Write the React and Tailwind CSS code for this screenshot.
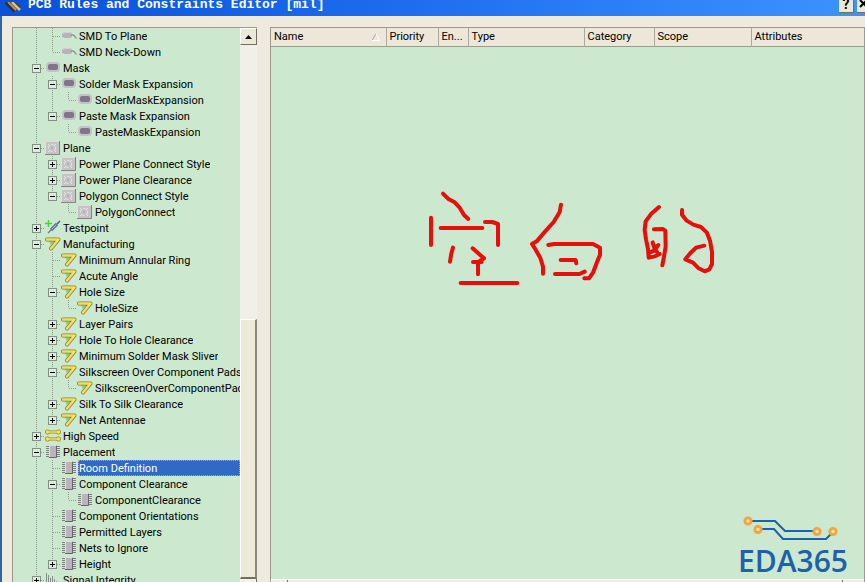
import { useState } from 'react';

const TREE = [
  {
    label: 'SMT',
    icon: 'smd',
    headless: true,
    children: [
      { label: 'SMD To Plane', icon: 'smd' },
      { label: 'SMD Neck-Down', icon: 'smd' },
    ],
  },
  {
    label: 'Mask',
    icon: 'mask',
    children: [
      { label: 'Solder Mask Expansion', icon: 'mask', children: [{ label: 'SolderMaskExpansion', icon: 'mask' }] },
      { label: 'Paste Mask Expansion', icon: 'mask', children: [{ label: 'PasteMaskExpansion', icon: 'mask' }] },
    ],
  },
  {
    label: 'Plane',
    icon: 'plane',
    children: [
      { label: 'Power Plane Connect Style', icon: 'plane', collapsed: true },
      { label: 'Power Plane Clearance', icon: 'plane', collapsed: true },
      { label: 'Polygon Connect Style', icon: 'plane', children: [{ label: 'PolygonConnect', icon: 'plane' }] },
    ],
  },
  { label: 'Testpoint', icon: 'probe', collapsed: true },
  {
    label: 'Manufacturing',
    icon: 'mfg',
    children: [
      { label: 'Minimum Annular Ring', icon: 'mfg' },
      { label: 'Acute Angle', icon: 'mfg' },
      { label: 'Hole Size', icon: 'mfg', children: [{ label: 'HoleSize', icon: 'mfg' }] },
      { label: 'Layer Pairs', icon: 'mfg', collapsed: true },
      { label: 'Hole To Hole Clearance', icon: 'mfg', collapsed: true },
      { label: 'Minimum Solder Mask Sliver', icon: 'mfg', collapsed: true },
      {
        label: 'Silkscreen Over Component Pads',
        icon: 'mfg',
        children: [{ label: 'SilkscreenOverComponentPads', icon: 'mfg' }],
      },
      { label: 'Silk To Silk Clearance', icon: 'mfg', collapsed: true },
      { label: 'Net Antennae', icon: 'mfg', collapsed: true },
    ],
  },
  { label: 'High Speed', icon: 'speed', collapsed: true },
  {
    label: 'Placement',
    icon: 'chip',
    children: [
      { label: 'Room Definition', icon: 'chip' },
      { label: 'Component Clearance', icon: 'chip', children: [{ label: 'ComponentClearance', icon: 'chip' }] },
      { label: 'Component Orientations', icon: 'chip' },
      { label: 'Permitted Layers', icon: 'chip' },
      { label: 'Nets to Ignore', icon: 'chip' },
      { label: 'Height', icon: 'chip', collapsed: true },
    ],
  },
  { label: 'Signal Integrity', icon: 'signal', collapsed: true, more: true },
];

const COLUMNS = [
  { label: 'Name', width: 'w-[115px]', sorted: true },
  { label: 'Priority', width: 'w-[52px]' },
  { label: 'En...', width: 'w-[30px]' },
  { label: 'Type', width: 'w-[116px]' },
  { label: 'Category', width: 'w-[70px]' },
  { label: 'Scope', width: 'w-[97px]' },
  { label: 'Attributes', width: '' },
];

const ICONS = {
  smd: (
    <>
      <path d="M3 4h6l2 2v3l-2 1H4L1 9V6z" fill="#b9b3b9" />
      <path d="M2 6l2-1.500h5" stroke="#d6d0d6" fill="none" />
      <path d="M10 7h2.500l3 3.500" stroke="#8f9a90" strokeWidth="1.4" fill="none" />
    </>
  ),
  mask: (
    <>
      <rect x="1" y="2" width="14" height="10" rx="4" fill="#c6c0c9" />
      <rect x="3" y="4" width="10" height="6" rx="2" fill="#7f7789" />
    </>
  ),
  plane: (
    <>
      <path d="M0 1h15v14H0z" fill="#c6c3c7" />
      <path d="M.5 14V1.500H14" stroke="#e0dee1" fill="none" />
      <path d="M0 14.500h14.500V1" stroke="#85808a" fill="none" />
      <circle cx="7" cy="8" r="3.500" stroke="#e8e6e9" fill="none" strokeDasharray="3 2" />
      <path d="M3 4l2 2M11 4L9 6M3 12l2-2M11 12l-2-2" stroke="#e8e6e9" />
      <circle cx="7" cy="8" r="1" fill="#aaa6ad" />
    </>
  ),
  probe: (
    <>
      <path d="M3.500 0v7M0 3.500h7" stroke="#4fd02c" strokeWidth="1.4" />
      <path d="M3 13l3-3" stroke="#6c7a86" strokeWidth="1.2" />
      <path d="M6 10l6-6" stroke="#5e7c9c" strokeWidth="3.4" />
      <path d="M7 9l4-4" stroke="#9fc0dc" />
      <path d="M12 4l3-3" stroke="#4c5a66" strokeWidth="1.4" />
    </>
  ),
  mfg: (
    <>
      <path d="M4 5h6l-4 4z" fill="#7fd68a" />
      <path
        d="M2 3.500h11.500L6 12.500"
        stroke="#8b7a34"
        strokeWidth="4"
        strokeLinejoin="round"
        strokeLinecap="round"
        fill="none"
      />
      <path
        d="M2 3.500h11.500L6 12.500"
        stroke="#efe268"
        strokeWidth="2.4"
        strokeLinejoin="round"
        strokeLinecap="round"
        fill="none"
      />
      <path d="M2 3.500h10" stroke="#f0cf9c" />
    </>
  ),
  speed: (
    <>
      <path d="M2 4h12M2 11h12" stroke="#98862b" strokeWidth="3.2" />
      <g fill="#f0e552" stroke="#98862b" strokeWidth=".8">
        <circle cx="2.500" cy="4" r="2.2" />
        <circle cx="13.500" cy="4" r="2.2" />
        <circle cx="2.500" cy="11" r="2.2" />
        <circle cx="13.500" cy="11" r="2.2" />
      </g>
      <path d="M2 4h12M2 11h12" stroke="#f0e552" strokeWidth="1.6" />
    </>
  ),
  chip: (
    <>
      <path d="M1 2.500h14M1 4.500h14M1 6.500h14M1 8.500h14M1 10.500h14M1 12.500h14" stroke="#7f7d83" />
      <rect x="4" y="1" width="8" height="13" fill="#b8b5bb" />
      <path d="M4.500 13V1.500H11" stroke="#e0dee2" fill="none" />
      <path d="M4 13.500h7.500V2" stroke="#67646b" fill="none" />
    </>
  ),
  signal: (
    <path
      d="M1.500 15V1M3.500 15V3M5.500 15V6M7.500 15V4M9.500 15V7M11.500 15V9M13.500 15v-5"
      stroke="#84908a"
    />
  ),
};

function Glyph({ name }) {
  return (
    <svg viewBox="0 0 16 16" className="h-4 w-4 shrink-0" aria-hidden="true">
      {ICONS[name]}
    </svg>
  );
}

// One 16px column of dotted connector lines.
function Guide({ d }) {
  return (
    <svg viewBox="0 0 16 16" className="h-4 w-4 shrink-0" aria-hidden="true">
      <path d={d} stroke="#8b9d90" strokeDasharray="1 1" fill="none" />
    </svg>
  );
}

function Toggle({ label, open, last, onClick }) {
  return (
    <button
      type="button"
      onClick={onClick}
      aria-label={`${open ? 'Collapse' : 'Expand'} ${label}`}
      className="h-4 w-4 shrink-0"
    >
      <svg viewBox="0 0 16 16" className="block h-4 w-4">
        <path
          d={last ? 'M8.500 0v8M9 8.500h7' : 'M8.500 0v16M9 8.500h7'}
          stroke="#8b9d90"
          strokeDasharray="1 1"
          fill="none"
        />
        <rect x="4.500" y="4.500" width="8" height="8" fill="#d9eddd" stroke="#848f86" />
        <path d={open ? 'M6 8.500h5' : 'M6 8.500h5M8.500 6v5'} stroke="#000" />
      </svg>
    </button>
  );
}

function TreeNode({ node, trail, last, selected, onSelect }) {
  const [open, setOpen] = useState(!node.collapsed);
  const active = selected === node.label;
  const expandable = node.children || node.collapsed;

  return (
    <li>
      {!node.headless && (
        <div className="flex h-4">
          {trail.map((passes, i) => (
            <Guide key={i} d={passes ? 'M8.500 0v16' : ''} />
          ))}
          {expandable ? (
            <Toggle label={node.label} open={open} last={last} onClick={() => setOpen(!open)} />
          ) : (
            <Guide d={last ? 'M8.500 0v8M9 8.500h7' : 'M8.500 0v16M9 8.500h7'} />
          )}
          <div className="flex min-w-0 flex-1 gap-px pl-px">
            <Glyph name={node.icon} />
            <button
              type="button"
              onClick={() => onSelect(node.label)}
              className={`flex h-4 overflow-hidden pl-px text-left leading-[18px] whitespace-nowrap ${
                active
                  ? 'flex-1 bg-[#316ac5] text-white outline-1 -outline-offset-1 outline-dotted outline-[#c9a35a]'
                  : ''
              }`}
            >
              {node.label}
            </button>
          </div>
        </div>
      )}
      {open && node.children && (
        <ul>
          {node.children.map((child, i) => (
            <TreeNode
              key={child.label}
              node={child}
              trail={[...trail, !last]}
              last={i === node.children.length - 1}
              selected={selected}
              onSelect={onSelect}
            />
          ))}
        </ul>
      )}
    </li>
  );
}

function TitleBar() {
  return (
    <header className="flex h-4 shrink-0 items-end justify-between overflow-hidden bg-linear-to-r from-[#0a50d8] via-[#1f6ff0] to-[#3c94fe] pl-[5px]">
      <div className="flex items-end gap-[7px]">
        <svg viewBox="0 0 16 14" className="h-[14px] w-4" aria-hidden="true">
          <path d="M1 0l9 9" stroke="#2b2f3a" strokeWidth="4" />
          <path d="M3 0l8 8" stroke="#c9913a" strokeWidth="2" />
          <path d="M7 0l8 8" stroke="#f0c53c" strokeWidth="2.500" />
          <path d="M10 0l5 5" stroke="#3a3f50" strokeWidth="1.500" />
        </svg>
        <h1 className="h-4 font-['Liberation_Mono',monospace] text-[13px] leading-[9px] font-bold whitespace-nowrap text-white">
          PCB Rules and Constraints Editor [mil]
        </h1>
      </div>
      <div className="flex h-4 gap-[3px] font-bold text-black">
        <button
          type="button"
          aria-label="Help"
          className="flex h-[13px] w-[15px] items-start justify-center border-r border-b border-[#716f64] bg-[#ece9d8] text-[14px] leading-[9px]"
        >
          ?
        </button>
        <button
          type="button"
          aria-label="Close"
          className="h-[13px] w-2 overflow-hidden border-b border-[#716f64] bg-[#ece9d8]"
        >
          <svg viewBox="0 0 8 12" className="h-3 w-2">
            <path d="M3 0l7 7M10 0L3 7" stroke="#000" strokeWidth="2" />
          </svg>
        </button>
      </div>
    </header>
  );
}

function RuleTree() {
  const [selected, setSelected] = useState('Room Definition');

  return (
    <nav
      aria-label="Design rules"
      className="flex w-[245px] shrink-0 overflow-hidden border-t border-l border-[#9c9a8c] bg-[#cce8cf]"
    >
      <ul className="min-w-0 flex-1 pl-[15px]">
        {TREE.map((node, i) => (
          <TreeNode
            key={node.label}
            node={node}
            trail={[]}
            last={i === TREE.length - 1 && !node.more}
            selected={selected}
            onSelect={setSelected}
          />
        ))}
      </ul>
      <div className="flex w-[17px] shrink-0 flex-col bg-[#f0f0e8]">
        <button
          type="button"
          aria-label="Scroll up"
          className="flex h-[17px] shrink-0 items-center justify-center border border-t-white border-r-[#716f64] border-b-[#716f64] border-l-white bg-[#ece9d8]"
        >
          <svg viewBox="0 0 7 4" className="h-1 w-[7px]">
            <path d="M0 4L3.500 0L7 4z" fill="#000" />
          </svg>
        </button>
        <div className="min-h-0 flex-[275]" />
        <div className="min-h-0 flex-[258] border-t border-r-2 border-b-2 border-l border-t-white border-r-[#8a887c] border-b-[#716f64] border-l-white bg-[#ece9d8]" />
        <div className="h-[3px] shrink-0 border-r border-[#716f64] bg-[#f4f2e6]" />
      </div>
    </nav>
  );
}

function Scribble() {
  return (
    <svg
      viewBox="0 0 960 360"
      className="pointer-events-none absolute top-[133px] left-[139px] h-[120px] w-[320px]"
      fill="none"
      stroke="#e60f0b"
      strokeWidth="12"
      strokeLinecap="round"
      strokeLinejoin="round"
      role="img"
      aria-label="空白的"
    >
      <path d="M99 41L114 56L134 67L149 83L162 105L175 117" />
      <path d="M63 113v82M92 144h125M225 126l22 0L264 132v63" />
      <path d="M129 203L124 220L120 245M188 205L222 235L205 246M189 246h26M204 248v35M152 309h170" />
      <path d="M453 74L449 96L431 126L405 155L380 184L366 192L377 209L391 234L399 260V281" />
      <path d="M415 195L432 192H549L570 203V224L560 249L549 278L537 295H523M435 282H508L524 275" />
      <path d="M452 240h45l2 10" />
      <path d="M747 81L724 101L707 124L704 150L708 178L714 207L716 233L735 229L749 222" />
      <path d="M732 148L758 147L766 152L767 200L762 230L757 256M728 187L733 204L745 195L735 210L722 217M733 204L741 216" />
      <path d="M816 90V104L829 121L850 134L873 141L890 157L900 182L906 216V252L898 268L884 274L866 265L849 248L826 238L842 218L858 203L883 197" />
    </svg>
  );
}

function Logo() {
  return (
    <div className="absolute right-[14px] bottom-0 w-[112px] text-[#215fae]">
      <svg viewBox="0 0 112 28" className="block h-7 w-[112px]" fill="none" aria-hidden="true">
        <path d="M14 7h23l10 10h28M24 15h12l9 10h43l5-5" stroke="#1c62ad" strokeWidth="2" />
        <g stroke="#f0a63c" strokeWidth="2.800" fill="#f6e3b8">
          <circle cx="10" cy="7" r="3.200" />
          <circle cx="20" cy="15.500" r="3.200" />
          <circle cx="79" cy="17.500" r="3.200" />
          <circle cx="95" cy="17.500" r="3.200" />
        </g>
      </svg>
      <div className="font-['Open_Sans',sans-serif] text-[30px] leading-[37px] font-semibold">EDA365</div>
    </div>
  );
}

function RuleTable() {
  return (
    <section className="flex min-w-0 flex-1 flex-col border-x border-t border-[#9c9a8c] bg-[#cce8cf]">
      <table className="w-full table-fixed border-collapse">
        <thead>
          <tr className="h-[18px] border-b border-[#9c9a8c] bg-[#ece7d9]">
            {COLUMNS.map((col) => (
              <th
                key={col.label}
                scope="col"
                className={`${col.width} border-l border-[#aca899] pt-px pb-0 pl-[3px] text-left leading-4 font-normal whitespace-nowrap first:border-l-0`}
              >
                <div className="flex items-center justify-between">
                  {col.label}
                  {col.sorted && (
                    <svg viewBox="0 0 8 8" className="mr-[6px] h-2 w-2" fill="none" aria-hidden="true">
                      <path d="M0 7.500L4 .5" stroke="#aca899" />
                      <path d="M4 .5L7.500 7.500H0" stroke="#fff" />
                    </svg>
                  )}
                </div>
              </th>
            ))}
          </tr>
        </thead>
      </table>
      <div className="relative min-h-0 flex-1 overflow-hidden">
        <Scribble />
        <Logo />
      </div>
      <div className="flex h-[3px] shrink-0 border-t border-white bg-[#f2f0e4]">
        <div className="w-[17px] border-r border-[#716f64]" />
        <div className="flex-1 border-r border-[#716f64]" />
        <div className="w-[21px]" />
      </div>
    </section>
  );
}

export default function App() {
  return (
    <div className="flex h-screen flex-col overflow-hidden bg-[#efeadf] font-[Roboto,'Liberation_Sans',sans-serif] text-[11px] text-black">
      <TitleBar />
      <main className="flex min-h-0 flex-1 gap-[13px] border-l-2 border-[#2f62a8] pt-[11px] pl-[10px]">
        <RuleTree />
        <RuleTable />
      </main>
    </div>
  );
}
